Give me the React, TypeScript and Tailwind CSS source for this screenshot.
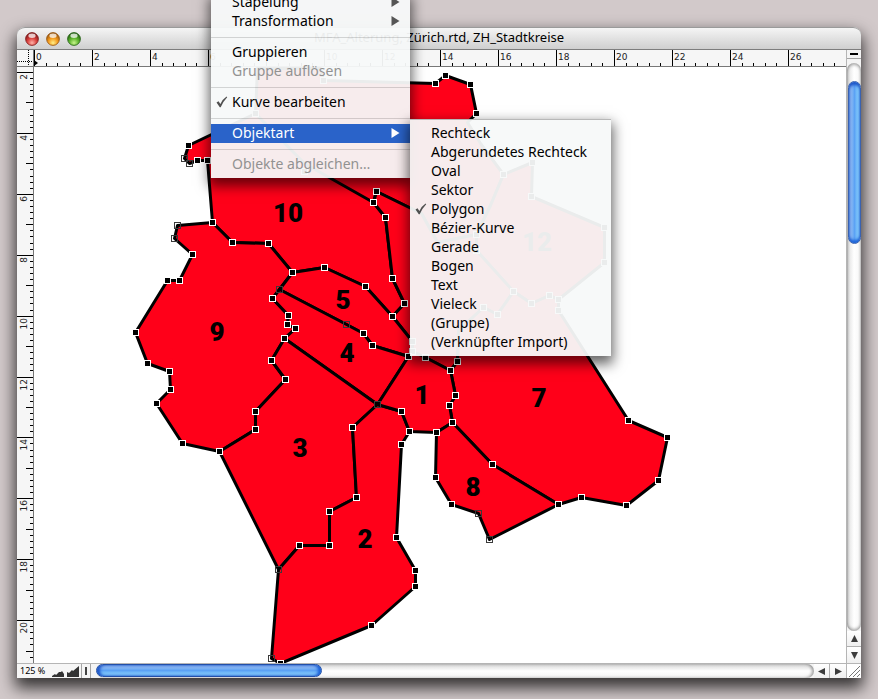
import React from 'react';

// --- Data ---

type Point = [number, number];

const districts: { id: string; label?: Point; points: Point[] }[] = [
  {
    id: '11',
    points: [[257, 68], [320, 68], [323, 80], [435, 83], [445, 75], [470, 84], [476, 113], [467, 122], [480, 143], [503, 174], [490, 205], [476, 234], [437, 242], [421, 213], [376, 191], [373, 202], [304, 171], [255, 113]],
  },
  {
    id: '10',
    label: [288, 213],
    points: [[188, 145], [184, 158], [189, 163], [197, 160], [207, 160], [212, 222], [232, 242], [268, 243], [292, 272], [324, 267], [365, 286], [392, 316], [404, 303], [392, 278], [385, 217], [373, 202], [304, 163], [255, 113]],
  },
  {
    id: '12',
    label: [537, 242],
    points: [[503, 174], [532, 162], [531, 196], [604, 227], [604, 262], [558, 299], [549, 295], [531, 303], [513, 291], [476, 250], [476, 234], [490, 205]],
  },
  {
    id: '6',
    points: [[376, 191], [421, 213], [437, 242], [476, 234], [476, 250], [513, 291], [497, 314], [483, 307], [458, 330], [457, 361], [450, 370], [425, 357], [412, 351], [412, 341], [392, 316], [404, 303], [392, 278], [385, 217], [373, 202]],
  },
  {
    id: '9',
    label: [217, 332],
    points: [[212, 222], [177, 225], [174, 238], [192, 254], [179, 280], [167, 280], [135, 332], [147, 363], [169, 371], [170, 389], [156, 403], [182, 443], [219, 451], [255, 429], [255, 411], [285, 379], [271, 360], [284, 338], [295, 328], [287, 324], [288, 315], [272, 298], [279, 289], [292, 272], [268, 243], [232, 242]],
  },
  {
    id: '5',
    label: [343, 300],
    points: [[279, 289], [292, 272], [324, 267], [365, 286], [392, 316], [412, 341], [412, 351], [408, 356], [372, 345], [363, 333], [346, 324]],
  },
  {
    id: '4',
    label: [347, 353],
    points: [[279, 289], [346, 324], [363, 333], [372, 345], [408, 356], [377, 404], [284, 338], [295, 328], [287, 324], [288, 315], [272, 298]],
  },
  {
    id: '3',
    label: [300, 448],
    points: [[284, 338], [377, 404], [352, 427], [356, 497], [329, 511], [329, 545], [299, 545], [278, 569], [219, 451], [255, 429], [255, 411], [285, 379], [271, 360]],
  },
  {
    id: '2',
    label: [365, 539],
    points: [[377, 404], [401, 411], [409, 431], [401, 444], [396, 537], [415, 570], [415, 586], [371, 625], [280, 663], [271, 658], [278, 569], [299, 545], [329, 545], [329, 511], [356, 497], [352, 427]],
  },
  {
    id: '7',
    label: [539, 398],
    points: [[452, 422], [449, 405], [455, 395], [450, 370], [457, 361], [458, 330], [483, 307], [497, 314], [513, 291], [531, 303], [549, 295], [558, 299], [558, 310], [628, 420], [667, 437], [658, 480], [626, 505], [581, 497], [558, 504], [492, 464]],
  },
  {
    id: '1',
    label: [422, 395],
    points: [[408, 356], [412, 351], [425, 357], [450, 370], [455, 395], [449, 405], [452, 422], [436, 432], [409, 431], [401, 411], [377, 404]],
  },
  {
    id: '8',
    label: [473, 487],
    points: [[436, 432], [452, 422], [492, 464], [558, 504], [489, 539], [478, 513], [451, 504], [435, 477]],
  },
];

// Points whose handle is drawn as an outline only
const hollow = new Set(['184,158', '189,163', '177,225', '174,238', '279,289', '346,324', '377,404', '478,513', '489,539', '278,569', '271,658']);
// Corners that carry no handle
const plain = new Set(['257,68', '320,68', '421,213', '437,242', '467,122', '480,143', '490,205', '458,330', '304,163']);

const handles = Array.from(new Set(districts.flatMap((d) => d.points.map((p) => p.join(','))))).filter((key) => !plain.has(key));

type MenuEntry = { label: string; arrow?: boolean; checked?: boolean; disabled?: boolean; active?: boolean } | null;

const objectMenu: MenuEntry[] = [
  { label: 'Stapelung', arrow: true },
  { label: 'Transformation', arrow: true },
  null,
  { label: 'Gruppieren' },
  { label: 'Gruppe auflösen', disabled: true },
  null,
  { label: 'Kurve bearbeiten', checked: true },
  null,
  { label: 'Objektart', arrow: true, active: true },
  null,
  { label: 'Objekte abgleichen…', disabled: true },
];

const typeMenu: MenuEntry[] = [
  { label: 'Rechteck' },
  { label: 'Abgerundetes Rechteck' },
  { label: 'Oval' },
  { label: 'Sektor' },
  { label: 'Polygon', checked: true },
  { label: 'Bézier-Kurve' },
  { label: 'Gerade' },
  { label: 'Bogen' },
  { label: 'Text' },
  { label: 'Vieleck' },
  { label: '(Gruppe)' },
  { label: '(Verknüpfter Import)' },
];

// --- Menus ---

const MenuItems = ({ entries }: { entries: MenuEntry[] }) => (
  <>
    {entries.map((entry, index) =>
      entry === null ? (
        <li key={index} role="separator" className="flex h-3 items-center">
          <span className="h-px w-full bg-black/15" />
        </li>
      ) : (
        <li key={index} role="none">
          <button
            role="menuitem"
            disabled={entry.disabled}
            className={`flex h-[19px] w-full items-center pr-2.5 pb-0.5 text-left text-[14px] leading-[17px] whitespace-nowrap ${
              entry.active ? 'bg-[#2a63c9] text-white' : entry.disabled ? 'text-[#929292]' : 'text-black'
            }`}
          >
            <span className="flex w-[21px] justify-center">
              {entry.checked && (
                <svg width="12" height="12" viewBox="0 0 12 12" fill="#505050">
                  <path d="M0.5 6.5 L2.5 5.2 L4.4 8 Q6.8 3 10.6 0.6 L11.2 1.3 Q7.4 5.2 4.7 11.3 L3.8 11.3 Z" />
                </svg>
              )}
            </span>
            <span className="flex-1">{entry.label}</span>
            {entry.arrow && (
              <svg width="9" height="10" viewBox="0 0 9 10" fill={entry.active ? '#ffffff' : '#555555'}>
                <path d="M0.5 0 L8.5 5 L0.5 10 Z" />
              </svg>
            )}
          </button>
        </li>
      )
    )}
  </>
);

// --- Rulers ---

const HorizontalRuler = () => (
  <svg className="h-4 w-full min-w-0 flex-1 font-['DejaVu_Sans',sans-serif]" aria-hidden="true">
    {Array.from({ length: 70 }, (_, i) => {
      const x = Math.round(i * 11.6);
      const major = i % 5 === 0;
      return (
        <g key={i}>
          <rect x={x} y={major ? 0 : 13} width="1" height={major ? 16 : 3} fill="#000" />
          {major && <text x={x + 2} y="10" fontSize="9" fill="#222">{(i / 5) * 2}</text>}
        </g>
      );
    })}
    <path d="M0 10 L4 13 L0 16 Z" />
  </svg>
);

const VerticalRuler = () => (
  <svg className="h-full w-4 font-['DejaVu_Sans',sans-serif]" aria-hidden="true">
    {Array.from({ length: 98 }, (_, i) => {
      const y = Math.round(5 + i * 6.09);
      const major = i % 10 === 0;
      const length = major ? 16 : i % 5 === 0 ? 7 : 3;
      return (
        <g key={i}>
          <rect x={16 - length} y={y} width={length} height="1" fill="#000" />
          {major && (
            <text transform={`translate(10 ${y + 2}) rotate(-90)`} textAnchor="end" fontSize="9" fill="#222">
              {(i / 10) * 2 + 2}
            </text>
          )}
        </g>
      );
    })}
  </svg>
);

// --- Drawing ---

const CityMap = () => (
  <svg className="block h-full w-full" role="img" aria-label="Stadtkreise">
    <g transform="translate(-34 -67)">
      {districts.map((d) => (
        <polygon
          key={d.id}
          points={d.points.map(([x, y]) => `${x + 0.5},${y + 0.5}`).join(' ')}
          fill="#ff0019"
          stroke="#000"
          strokeWidth="3"
          strokeLinejoin="round"
        />
      ))}
      {handles.map((key) => {
        const [x, y] = key.split(',').map(Number);
        return hollow.has(key) ? (
          <rect key={key} x={x - 2.5} y={y - 2.5} width="6" height="6" fill="none" stroke="#3a3a3a" />
        ) : (
          <g key={key}>
            <rect x={x - 3} y={y - 3} width="7" height="7" fill="#fff" />
            <rect x={x - 2} y={y - 2} width="5" height="5" fill="#000" />
          </g>
        );
      })}
      {districts.map((d) =>
        d.label ? (
          <text key={d.id} x={d.label[0]} y={d.label[1] + 9} textAnchor="middle" fontSize="26" fontWeight="900" className="font-['Roboto',sans-serif]">
            {d.id}
          </text>
        ) : null
      )}
    </g>
  </svg>
);

// --- Window chrome ---

const lights = [
  { name: 'Schließen', dark: '#7c1414', mid: '#d9403c', light: '#ffb3a8' },
  { name: 'Minimieren', dark: '#94500a', mid: '#f49a1c', light: '#fff08a' },
  { name: 'Zoomen', dark: '#1f5c10', mid: '#5cb32c', light: '#c8f58c' },
];

const TitleBar = () => (
  <header className="relative flex h-[23px] items-center justify-center rounded-t-lg border-t border-b border-t-[#9a9a9a] border-b-[#7d7d7d] bg-linear-to-b from-[#f5f5f5] to-[#cfcfcf]">
    <div className="absolute left-2 flex gap-[7px]">
      {lights.map((l, i) => (
        <button key={l.name} aria-label={l.name} className="size-3.5">
          <svg width="14" height="14" viewBox="0 0 14 14">
            <defs>
              <radialGradient id={`light${i}`} cx="0.5" cy="0.8" r="0.75">
                <stop offset="0" stopColor={l.light} />
                <stop offset="0.5" stopColor={l.mid} />
                <stop offset="1" stopColor={l.dark} />
              </radialGradient>
            </defs>
            <circle cx="7" cy="7" r="6.4" fill={`url(#light${i})`} stroke={l.dark} strokeOpacity="0.8" />
            <ellipse cx="7" cy="3.8" rx="3.6" ry="2.2" fill="#fff" fillOpacity="0.75" />
          </svg>
        </button>
      ))}
    </div>
    <h1 className="pb-0.5 text-[13px] leading-[19px]">MFA_Alterung, Zürich.rtd, ZH_Stadtkreise</h1>
  </header>
);

const Arrow = ({ d, label, className }: { d: string; label: string; className: string }) => (
  <button aria-label={label} className={`flex items-center justify-center bg-linear-to-b from-white to-[#efefef] ${className}`}>
    <svg width="7" height="7" viewBox="0 0 7 7" fill="#3c3c3c">
      <path d={d} />
    </svg>
  </button>
);

const App: React.FC = () => {
  return (
    <main className="relative flex h-screen flex-col overflow-hidden bg-[#d2c9ca] px-[17px] pt-[27px] pb-[21px] font-['Noto_Sans',sans-serif] text-black">
      <section className="flex min-h-0 flex-1 flex-col rounded-t-lg bg-white shadow-[0_8px_16px_2px_rgba(0,0,0,0.75)]">
        <TitleBar />

        <div className="flex min-h-0 flex-1">
          <div className="flex min-w-0 flex-1 flex-col">
            {/* Top ruler */}
            <div className="flex h-[17px] border-b border-[#777] bg-[#f6f6f6]">
              <svg className="h-4 w-4 shrink-0" aria-hidden="true">
                <path d="M11.5 0 V16 M0 11.5 H16" stroke="#000" strokeDasharray="1 1" />
              </svg>
              <div className="flex min-w-0 flex-1 border-l border-[#777]">
                <HorizontalRuler />
              </div>
            </div>
            <div className="flex min-h-0 flex-1">
              <div className="w-[17px] shrink-0 overflow-hidden border-r border-[#777] bg-[#f6f6f6]">
                <VerticalRuler />
              </div>
              <div id="canvas" className="min-w-0 flex-1 overflow-hidden bg-white">
                <CityMap />
              </div>
            </div>
          </div>

          {/* Vertical scroll bar */}
          <div className="flex w-[15px] flex-col border-l border-[#b5b5b5] bg-white">
            <button aria-label="Fenster teilen" className="flex h-[9px] items-center justify-center border-b border-[#a5a5a5] bg-[#f4f4f4]">
              <span className="h-0.5 w-2 bg-black" />
            </button>
            <div className="min-h-0 flex-1 bg-[#f4f4f4] pt-1">
              <div
                role="scrollbar"
                aria-orientation="vertical"
                aria-controls="canvas"
                aria-valuenow={4}
                className="h-full rounded-full bg-linear-to-r from-[#dcdcdc] via-white to-[#f6f6f6] pt-[18px] shadow-[inset_0_2px_3px_rgba(0,0,0,0.3),inset_0_-2px_3px_rgba(0,0,0,0.3)]"
              >
                <div className="mx-auto h-[163px] w-[13px] rounded-full border border-[#3a62b0] bg-linear-to-r from-[#a9c8f2] via-[#5ba2f4] to-[#9be2ff] shadow-[inset_0_3px_3px_#1d55c8,inset_0_-3px_3px_#1d63d8]" />
              </div>
            </div>
            <Arrow label="Nach oben" className="h-4 border-b border-[#b0b0b0]" d="M3.5 0 L7 7 H0 Z" />
            <Arrow label="Nach unten" className="h-4" d="M0 0 H7 L3.5 7 Z" />
          </div>
        </div>

        {/* Status bar */}
        <footer className="flex h-[15px] border-t border-[#b5b5b5] bg-white">
          <button className="w-[34px] bg-[#f6f6f6] pl-[3px] text-left text-[9px] leading-[14px] whitespace-nowrap">125 %</button>
          <button aria-label="Darstellungsgröße" className="w-[31px] border-r border-[#a5a5a5] bg-[#f6f6f6]">
            <svg width="30" height="14" viewBox="0 0 30 14" fill="#333">
              <path d="M1 13 V12 L4 10 L5 11 L8 8 L10 8 L11 7 L13 10 V13 Z M16 13 V8 L18 9 L21 6 L22 7 L28 2 V13 Z" />
            </svg>
          </button>
          <button aria-label="Seitenleiste" className="flex w-[9px] items-center justify-center border-r border-[#a5a5a5] bg-[#f6f6f6]">
            <span className="h-2 w-0.5 bg-[#444]" />
          </button>
          <div className="min-w-0 flex-1 bg-[#f4f4f4] pl-[5px]">
            <div
              role="scrollbar"
              aria-orientation="horizontal"
              aria-controls="canvas"
              aria-valuenow={0}
              className="h-full rounded-full bg-linear-to-b from-[#d5d5d5] via-white to-[#f4f4f4] shadow-[inset_-2px_0_3px_rgba(0,0,0,0.35)]"
            >
              <div className="h-[13px] w-[226px] rounded-full border border-[#2350a8] bg-linear-to-b from-[#a9c8f2] via-[#5ba2f4] to-[#9be2ff] shadow-[inset_3px_0_3px_#1d55c8,inset_-3px_0_3px_#1d63d8]" />
            </div>
          </div>
          <Arrow label="Nach links" className="w-4 border-r border-[#b0b0b0]" d="M7 0 V7 L0 3.5 Z" />
          <Arrow label="Nach rechts" className="w-4" d="M0 0 L7 3.5 L0 7 Z" />
          <svg className="h-[14px] w-[15px] border-l border-[#b5b5b5]" viewBox="0 0 14 14" aria-hidden="true">
            <path d="M2 13 L13 2 M6 13 L13 6 M10 13 L13 10" stroke="#777" fill="none" />
          </svg>
        </footer>
      </section>

      {/* Open menus */}
      <ul role="menu" className="absolute -top-[7px] left-[211px] w-[199px] bg-[#f7f9f9]/95 pb-1 shadow-[0_6px_12px_2px_rgba(0,0,0,0.6)]">
        <MenuItems entries={objectMenu} />
      </ul>
      <ul role="menu" aria-label="Objektart" className="absolute top-[119px] left-[410px] w-[201px] border-t border-[#b8b8b8] bg-[#f7f9f9]/95 py-1 shadow-[0_6px_12px_2px_rgba(0,0,0,0.6)]">
        <MenuItems entries={typeMenu} />
      </ul>
    </main>
  );
};

export default App;
